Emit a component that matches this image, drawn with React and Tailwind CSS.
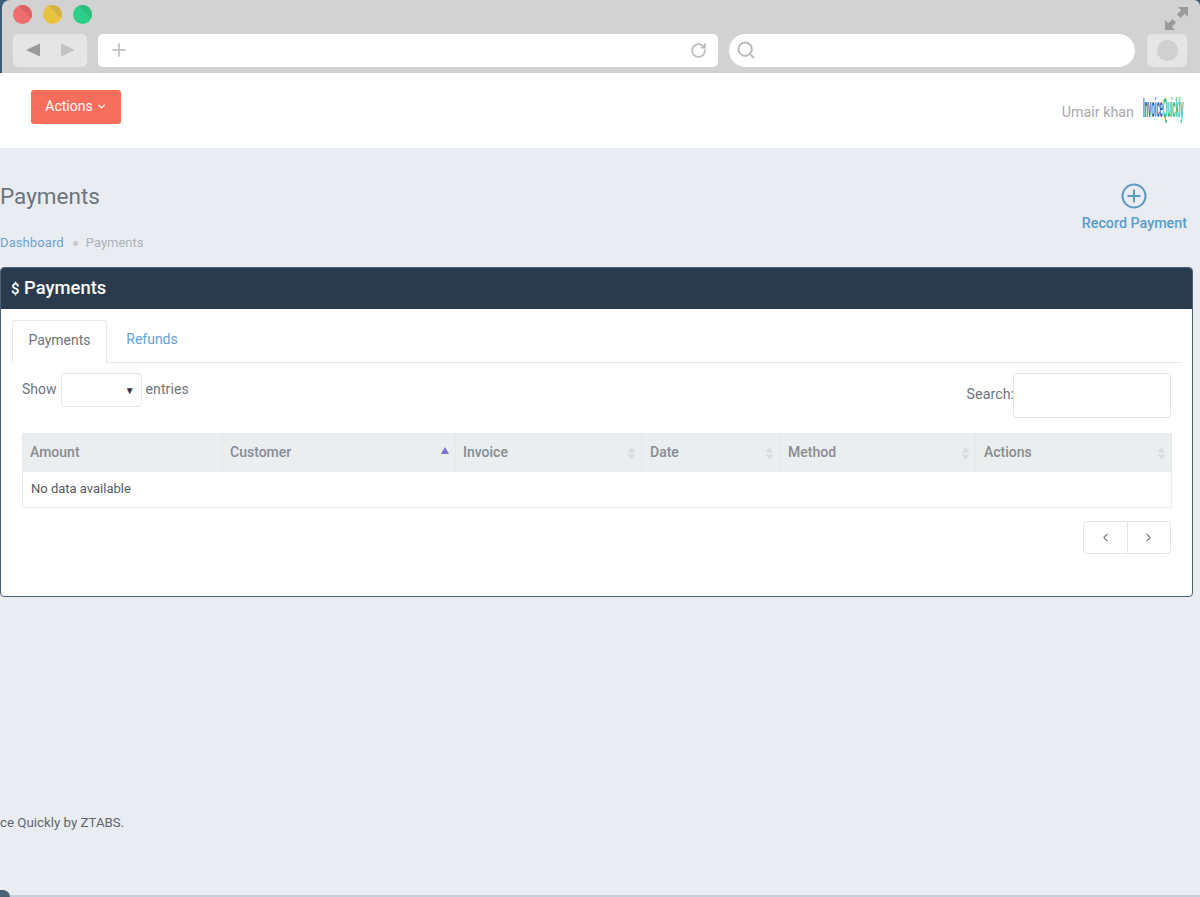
import React from 'react';
import { ChevronDown, ChevronLeft, ChevronRight, Search, RotateCw, Plus } from 'lucide-react';

const columns = [
  { name: 'Amount', width: 'w-[200px]', pad: 'pl-[7px]' },
  { name: 'Customer', width: 'w-[233px]', pad: 'pl-[7px]', sorted: true },
  { name: 'Invoice', width: 'w-[186px]', pad: 'pl-[7px]', arrows: true },
  { name: 'Date', width: 'w-[138px]', pad: 'pl-[8px]', arrows: true },
  { name: 'Method', width: 'w-[196px]', pad: 'pl-[8px]', arrows: true },
  { name: 'Actions', width: 'w-[196px]', pad: 'pl-[8px]', arrows: true },
];

const Dot = ({ color, shade }) => (
  <span className={`relative block w-[19px] h-[19px] rounded-full overflow-hidden ${color}`}>
    <span className={`absolute inset-0 ${shade} [clip-path:polygon(25%_0,100%_0,100%_75%)]`} />
  </span>
);

const SortArrows = () => (
  <svg width="9" height="15" viewBox="0 0 9 15" className="absolute right-[5px] top-[12px]">
    <path d="M4.500 1 L8.500 6.500 H0.500 Z M4.500 14 L0.500 8.500 H8.500 Z" fill="#d8dde0" />
  </svg>
);

const BrowserBar = () => (
  <div className="h-[73px] bg-[#3d5a73]">
    <div className="h-[73px] ml-[2px] rounded-tl-[8px] rounded-tr-[6px] bg-[#d2d2d2] pl-[11px] pr-[13px] pt-[5px] flex flex-col gap-[10px]">
      <div className="flex items-center justify-between h-[19px]">
        <div className="flex gap-[11px]">
          <Dot color="bg-[#ee6e6e]" shade="bg-[#dc6262]" />
          <Dot color="bg-[#e8c340]" shade="bg-[#d4b045]" />
          <Dot color="bg-[#2bcf85]" shade="bg-[#2fbd7d]" />
        </div>
        <svg width="23" height="23" viewBox="0 0 23 23" className="-mr-[1px] mt-[8px]" fill="#9a9a9a">
          <path d="M13 0h10v10l-3.200-3.200-4.300 4.300-3.600-3.600 4.300-4.300z" />
          <path d="M0 23v-10l3.200 3.200 4.300-4.300 3.600 3.600-4.300 4.300 3.200 3.200z" />
        </svg>
      </div>
      <div className="flex items-center h-[34px] mt-[-1px]">
        <div className="w-[74px] h-[33px] rounded-[5px] bg-[#e5e5e5] flex items-center justify-center gap-[21px]">
          <svg width="14" height="14" viewBox="0 0 14 14"><path d="M0 7 L14 0.500 V13.500 Z" fill="#9a9a9a" /></svg>
          <svg width="14" height="14" viewBox="0 0 14 14"><path d="M14 7 L0 0.500 V13.500 Z" fill="#c2c2c2" /></svg>
        </div>
        <div className="ml-[11px] w-[620px] h-[33px] rounded-[5px] bg-white flex items-center justify-between px-[12px]">
          <Plus size={20} strokeWidth={2.5} className="text-[#c8c8c8] -ml-[1px]" />
          <RotateCw size={17} strokeWidth={2.500} className="text-[#bcbcbc] -mr-[1px]" />
        </div>
        <div className="ml-[11px] w-[406px] h-[33px] rounded-full bg-white flex items-center pl-[7px]">
          <Search size={20} strokeWidth={2.500} className="text-[#bcbcbc]" />
        </div>
        <div className="ml-[12px] w-[40px] h-[33px] rounded-[5px] bg-[#e5e5e5] flex items-center justify-center">
          <span className="block w-[21px] h-[21px] rounded-full bg-[#d0d0d0]" />
        </div>
      </div>
    </div>
  </div>
);

const Header = () => (
  <div className="h-[75px] bg-white flex justify-between pl-[31px] pr-[16px] pt-[17px]">
    <button className="h-[34px] w-[90px] rounded-[3px] bg-[#f76d5c] text-white text-[14px] flex items-center justify-center gap-[3px] pb-[2px]">
      Actions <ChevronDown size={11} strokeWidth={3} />
    </button>
    <div className="flex items-start">
      <span className="text-[14.3px] text-[#a7a9ac] mt-[12px] -ml-[1px]">Umair khan</span>
      <div className="ml-[9px] w-[41px] h-[30px] mt-[3px]">
        <span className="block w-max origin-left scale-x-[0.205] whitespace-nowrap text-[28px] leading-[30px] font-bold font-['Liberation_Sans',sans-serif]">
          <span className="text-[#1c5fa8]">Invoice</span>
          <span className="text-[#2fb673]">Quickly</span>
        </span>
      </div>
    </div>
  </div>
);

const PageTitle = () => (
  <div className="h-[119px] flex justify-between pr-[13px]">
    <div>
      <h1 className="text-[22.5px] leading-[28px] text-[#6d747c] mt-[34px]">Payments</h1>
      <div className="flex items-center text-[13px] leading-[16px] mt-[25px]">
        <span className="text-[#6ba5d8] tracking-[0.1px]">Dashboard</span>
        <span className="w-[5px] h-[5px] rounded-full bg-[#c4c9ce] mx-[9px]" />
        <span className="text-[#adb3b9] -ml-[1px]">Payments</span>
      </div>
    </div>
    <div className="flex flex-col items-center pt-[35px]">
      <svg width="26" height="26" viewBox="0 0 26 26" fill="none" stroke="#5b9bc8" strokeWidth="2">
        <circle cx="13" cy="13" r="11.500" />
        <path d="M13 6.500v13M6.500 13h13" />
      </svg>
      <span className="text-[14.3px] leading-[18px] font-medium text-[#5b9bc8] mt-[5px]">Record Payment</span>
    </div>
  </div>
);

const PaymentsCard = () => (
  <div className="w-[1193px] h-[330px] rounded-[4px] border border-[#4a6076] bg-white overflow-hidden">
    <div className="h-[41px] bg-[#2a3b4d] text-white text-[18.400px] leading-[39px] pl-[10px] font-medium">
      <span className="text-[15px]">$</span> Payments
    </div>
    <div className="px-[11px] pt-[11px]">
      <div className="flex h-[43px] border-b border-[#e5e7ea] w-[1170px] text-[14px]">
        <div className="w-[95px] h-[43px] rounded-t-[3px] border border-b-0 border-[#e5e7ea] bg-white text-[#6d747c] flex items-center justify-center">
          <span className="-mt-[3px]">Payments</span>
        </div>
        <div className="w-[90px] flex items-center justify-center text-[#5f9fd6]">
          <span className="-mt-[3px]">Refunds</span>
        </div>
      </div>
      <div className="flex justify-between pl-[10px] w-[1159px] text-[14px] text-[#6d747c] mt-[9px] h-[61px]">
        <div className="flex items-start">
          <span className="mt-[7px]">Show</span>
          <div className="ml-[4px] w-[81px] h-[34px] mt-[1px] rounded-[4px] border border-[#e5e7ea] flex items-center justify-end pr-[6px] text-[#333] text-[10px]">▼</div>
          <span className="ml-[4px] mt-[7px] tracking-[0.1px]">entries</span>
        </div>
        <div className="flex items-start">
          <span className="mt-[12px] -mr-[1px] text-[14.300px]">Search:</span>
          <div className="w-[158px] h-[45px] mt-[1px] rounded-[3px] border border-[#e3e5e8]" />
        </div>
      </div>
      <table className="ml-[10px] w-[1149px] table-fixed border border-[#e9ecee] text-left">
        <thead>
          <tr className="h-[38px] bg-[#ebeeef]">
            {columns.map((col) => (
              <th key={col.name} className={`${col.width} ${col.pad} relative font-medium text-[14px] text-[#868c92] border-r border-[#e4e8ea]`}>
                {col.name}
                {col.sorted && <span className="absolute right-[6px] top-[13px] w-0 h-0 border-x-[4px] border-x-transparent border-b-[7px] border-b-[#7b73d8]" />}
                {col.arrows && <SortArrows />}
              </th>
            ))}
          </tr>
        </thead>
        <tbody>
          <tr className="h-[36px] border-t border-[#e9ecee]">
            <td colSpan={6} className="pl-[8px] text-[13px] text-[#555b61]">
              <span className="relative -top-[1px]">No data available</span>
            </td>
          </tr>
        </tbody>
      </table>
      <div className="flex justify-end w-[1159px] mt-[13px]">
        <div className="flex w-[88px] h-[33px] rounded-[4px] border border-[#e3e5e8] text-[#7b8187]">
          <div className="flex-1 flex items-center justify-center border-r border-[#e3e5e8]"><ChevronLeft size={13} /></div>
          <div className="flex-1 flex items-center justify-center"><ChevronRight size={13} /></div>
        </div>
      </div>
    </div>
  </div>
);

export default function App() {
  return (
    <div className="relative w-[1200px] h-[897px] overflow-hidden flex flex-col bg-[#e9edf1] font-['Roboto',sans-serif]">
      <BrowserBar />
      <Header />
      <PageTitle />
      <PaymentsCard />
      <p className="mt-[218px] text-[13.300px] leading-[16px] text-[#5f656b]">ce Quickly by ZTABS.</p>
      <div className="mt-auto h-[2px] bg-[#c5cfdc]" />
      <span className="absolute left-0 bottom-0 w-[10px] h-[7px] rounded-tr-full bg-[#4a6272]" />
    </div>
  );
}
